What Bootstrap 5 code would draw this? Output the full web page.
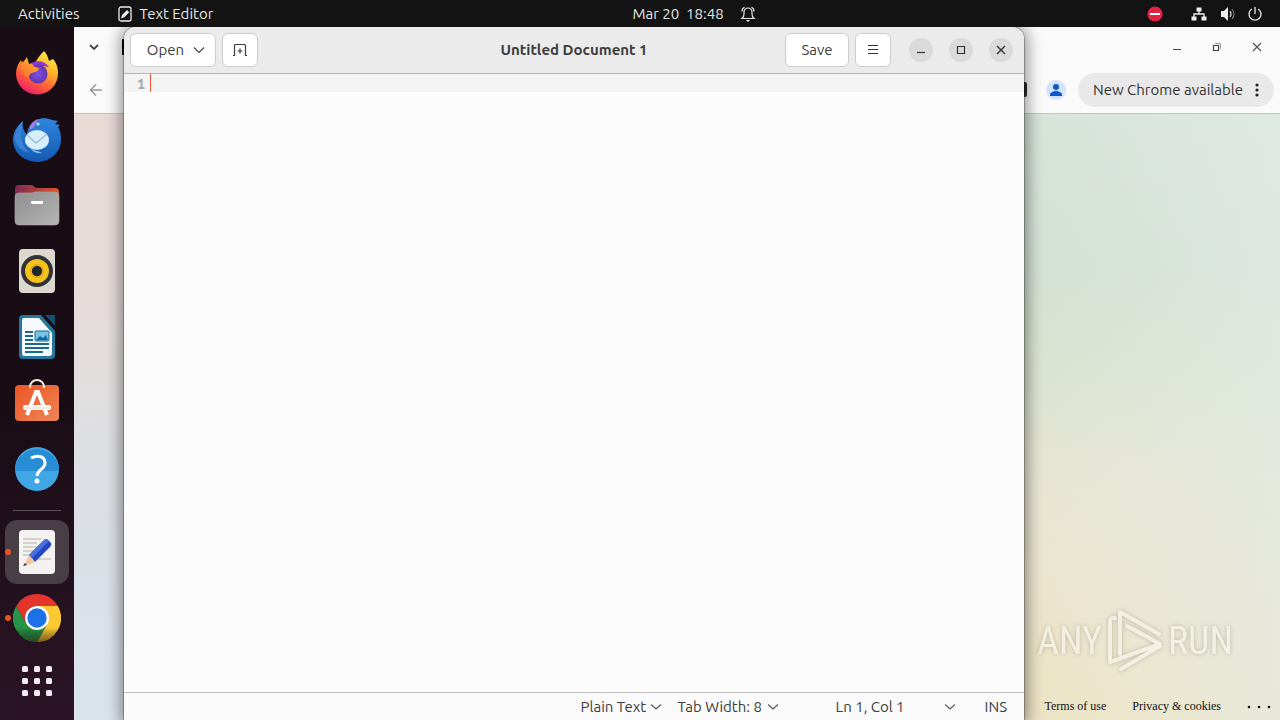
<!DOCTYPE html>
<html lang="en">
<head>
<meta charset="utf-8">
<meta name="viewport" content="width=device-width, initial-scale=1">
<title>Untitled Document 1 - Text Editor</title>
<link href="https://cdn.jsdelivr.net/npm/bootstrap@5.3.0/dist/css/bootstrap.min.css" rel="stylesheet">
<style>
body { font-family: Ubuntu, "Noto Sans", sans-serif; font-size: 15px; line-height: 20px; color: #3d3d3d; }
svg { display: block; flex: none; }
button { font: inherit; color: inherit; background: none; border: 0; padding: 0; }
.topbar { height: 27px; background: #131313; color: #e6e6e6; padding: 0 17px 0 18px; }
.side { flex: 1 1 0; }
.app-menu { margin-left: 38px; }
.clock { margin-left: 107px; }
.tray { gap: 10px; }
.dock { width: 74px; padding-top: 13px; background: linear-gradient(170deg, #190d15 55%, #2c1426); }
.dock-item { height: 66px; width: 64px; margin: 0 5px; flex: none; display: flex; align-items: center; justify-content: center; }
.dock-item svg { width: 48px; height: 48px; }
.tile { width: 64px; height: 64px; border-radius: 12px; background: #483e45; }
.dot { position: absolute; left: 0; width: 6px; height: 6px; border-radius: 50%; background: #e95420; top: 30px; }
.rule { width: 48px; height: 1px; background: #5d545a; margin: 8px auto; flex: none; }
.apps { height: 60px; }
.tabs { height: 40px; padding: 0 17px 0 14px; }
.tools { height: 46px; padding: 0 6px 0 15px; }
.chrome-head { background: #fafafa; border-bottom: 1px solid #bfc6c0; }
.win-btns { gap: 28px; }
.win-btn { width: 12px; height: 12px; }
.sliver { position: absolute; background: #000; }
.sliver-tab { left: 48px; top: 12px; width: 4px; height: 16px; }
.sliver-tool { right: 253px; top: 55px; width: 6px; height: 15px; background: #2b2b2b; border-radius: 2px; }
.profile { width: 20px; height: 20px; }
.update { height: 34px; border-radius: 17px; background: #e9e9e9; padding: 0 15px; color: #333; width: 196px; }
.page {
  background:
    linear-gradient(180deg, #e9dbd7 0%, #e7dbd8 24%, #e2dfdf 45%, #dcdfe5 62%, #dbe4ed 100%) left / 50% 100% no-repeat,
    linear-gradient(90deg, #e4ece800 60%, #e4ece899 100%) right / 50% 100% no-repeat,
    linear-gradient(180deg, #d8e3da 0%, #d4e0d5 25%, #d9e2d1 36%, #dde4d1 46%, #e7e5d2 60%, #ebe5cf 75%, #ede4c5 97%) right / 50% 100% no-repeat;
}
.foot { font-family: "Liberation Serif", serif; font-size: 12px; line-height: 16px; gap: 26px; padding: 0 8px 6px 0; }
.foot a { color: #111; text-decoration: none; }
.watermark { position: absolute; right: 47px; bottom: 46px; color: #f6f4ea; opacity: .75; font-family: "Liberation Sans Narrow", "Roboto Condensed", "Liberation Sans", sans-serif; font-size: 38px; line-height: 66px; filter: drop-shadow(0 0 2px #8a846caa); gap: 5px; }
.editor { position: absolute; top: 0; bottom: 0; left: 50px; right: 256px; background: #fcfcfc; border-radius: 12px 12px 0 0; box-shadow: 0 0 0 1px #00000040, 0 2px 16px 3px #00000070; }
.headbar { height: 47px; background: #ebebeb; border-bottom: 1px solid #b5b5b5; border-radius: 12px 12px 0 0; padding: 0 6px; }
.group { gap: 6px; }
.tool { height: 34px; background: #fff; border: 1px solid #cdcdcd; border-radius: 6px; display: flex; align-items: center; justify-content: center; }
.tool-open { width: 86px; gap: 9px; padding-left: 6px; }
.tool-square { width: 36px; }
.tool-save { width: 64px; }
.circle { width: 24px; height: 24px; border-radius: 50%; background: #dadada; display: flex; align-items: center; justify-content: center; }
.circles { gap: 16px; padding: 0 5px 0 12px; }
.sheet { background: linear-gradient(#f4f4f4, #f4f4f4) top / 100% 18px no-repeat; font-family: "Ubuntu Mono", "DejaVu Sans Mono", monospace; font-size: 14px; line-height: 18px; }
.gutter { width: 26px; padding: 1px 5px 0 0; text-align: right; color: #aaa; font-weight: bold; }
.caret { width: 1px; height: 18px; background: #e2583b; }
.sheet textarea { border: 0; padding: 0; background: none; resize: none; outline: 0; font: inherit; }
.status { height: 28px; border-top: 1px solid #c0c0c0; background: #fafafa; padding: 0 17px 0 0; }
.status button { display: flex; align-items: center; justify-content: space-between; white-space: nowrap; }
.st-type { width: 80px; margin-right: 17px; }
.st-tab { width: 100px; margin-right: 58px; }
.st-pos { width: 119px; margin-right: 30px; }
</style>
</head>
<body class="vh-100 d-flex flex-column overflow-hidden">
<header class="topbar d-flex align-items-center flex-shrink-0">
  <div class="side d-flex align-items-center">
    <button type="button">Activities</button>
    <button type="button" class="d-flex align-items-center gap-2 app-menu">
      <svg width="14" height="16" viewBox="0 0 14 16"><rect x="1" y="1" width="12" height="14" rx="2" fill="none" stroke="#eee" stroke-width="1.300"/><path d="M3 12.500l1-3.500 5-5 2.300 2.300-5 5z" fill="#eee"/></svg>
      Text Editor
    </button>
  </div>
  <button type="button" class="clock d-flex align-items-center">Mar 20&nbsp; 18:48
    <svg class="ms-3" width="16" height="18" viewBox="0 0 16 18" fill="none" stroke="#e6e6e6" stroke-width="1.200"><path d="M2 13.500h12q-2-1.500-2-4.500V7a4 4 0 0 0-8 0v2q0 3-2 4.500zM2 6.500q0-3 2.500-4.500M14 6.500q0-3-2.500-4.500"/><path d="M6 15h4l-2 2z" fill="#eee" stroke="none"/></svg>
  </button>
  <div class="side tray d-flex align-items-center justify-content-end">
    <svg class="me-3" width="16" height="16" viewBox="0 0 16 16"><circle cx="8" cy="8" r="7.600" fill="#e22344"/><path d="M3 8h10" stroke="#fff" stroke-width="2"/></svg>
    <svg width="20" height="16" viewBox="0 0 20 16"><path d="M7.500 1.500h5v4h-5zM2.500 10.500h5v4h-5zM12.500 10.500h5v4h-5z" fill="#eee"/><path d="M10 5v3M5 11V8h10v3" fill="none" stroke="#eee" stroke-width="1.300"/></svg>
    <svg width="18" height="16" viewBox="0 0 18 16"><path d="M2 5h3l4-4v14l-4-4H2z" fill="#eee"/><path d="M11 5q2 3 0 6" fill="none" stroke="#ccc" stroke-width="1.300"/><path d="M13 3q4 5 0 10" fill="none" stroke="#777" stroke-width="1.200"/></svg>
    <svg width="16" height="16" viewBox="0 0 16 16" fill="none" stroke="#ddd" stroke-width="1.400"><path d="M8 1v7M4.800 3a6 6 0 1 0 6.400 0"/></svg>
  </div>
</header>

<div class="d-flex flex-grow-1 overflow-hidden">
  <nav class="dock d-flex flex-column flex-shrink-0" aria-label="Dock">
    <button class="dock-item" aria-label="Firefox"><svg viewBox="0 0 48 48"><defs><linearGradient id="fx" x1=".8" y1="0" x2=".25" y2="1"><stop offset="0" stop-color="#fff14a"/><stop offset=".35" stop-color="#ffb52a"/><stop offset=".65" stop-color="#ff6434"/><stop offset="1" stop-color="#ec1673"/></linearGradient><linearGradient id="fo" x1="1" x2="0" y2="1"><stop stop-color="#ffb02a"/><stop offset="1" stop-color="#ff6a35"/></linearGradient><radialGradient id="fp"><stop offset="0" stop-color="#7d52e8"/><stop offset="1" stop-color="#6136a9"/></radialGradient></defs><path d="M31 2c3 3 4 6 5 10l4-2c4 5 5 9 5 14a21 21 0 1 1-42 1c0-6 2-10 5-14l1 4 5-7 2 7c2-1 4-1 6-1 2-4 5-8 9-12z" fill="url(#fx)"/><path d="M18 14c7-3 14-2 18 4l-6-1-8 1z" fill="#8d38cf"/><circle cx="25" cy="25" r="9.500" fill="url(#fp)"/><path d="M9 12c2 2 6 3 9 3 2 3 5 3 8 4 0 4-6 4-9 6l-2 4c-6-3-8-10-6-17z" fill="url(#fo)"/></svg></button>
    <button class="dock-item" aria-label="Thunderbird"><svg viewBox="0 0 48 48"><defs><linearGradient id="tb" x2="0" y2="1"><stop stop-color="#2f86dd"/><stop offset="1" stop-color="#1459b3"/></linearGradient></defs><path d="M10 6C3 12 0 18 0 25a24 22 0 0 0 48 0c0-6-1-10-3-13l2-2-5-1 3-3-6-1c-8-4-17-1-21 4-3 4-4 8-4 11-3-4-5-7-4-14z" fill="url(#tb)"/><path d="M10 6c-5 14-1 26 7 32C8 36 2 30 2 22 3 15 6 10 10 6z" fill="#3983d8"/><path d="M17 12c1-4 5-7 8-8l-4 8-4 3z" fill="#a77be8"/><circle cx="25" cy="9" r="1.500" fill="#bfe8ff"/><ellipse cx="24" cy="25" rx="12" ry="10" fill="#d9eefb"/><path d="M14 20l9 8 11-9" fill="none" stroke="#9fbdd3" stroke-width="1.500"/><path d="M17 33c4 3 9 3 12 5-6 1-10-2-12-5z" fill="#79c8f8"/></svg></button>
    <button class="dock-item" aria-label="Files"><svg viewBox="0 0 48 48"><defs><linearGradient id="fb"><stop stop-color="#7e2b55"/><stop offset="1" stop-color="#e35427"/></linearGradient><linearGradient id="ff" x2="1" y2="1"><stop stop-color="#8e8e8e"/><stop offset="1" stop-color="#b5b5b5"/></linearGradient></defs><path d="M2 8q0-4 4-4h13l4 3h19q4 0 4 4v14H2z" fill="url(#fb)"/><path d="M2 16q0-4 4-4h13l3-1h20q4 0 4 4v25q0 4-4 4H6q-4 0-4-4z" fill="url(#ff)" stroke="#b6a9a6" stroke-width=".6"/><rect x="18" y="20" width="12" height="3" rx="1" fill="#fff"/></svg></button>
    <button class="dock-item" aria-label="Rhythmbox"><svg viewBox="0 0 48 48"><rect x="6" y="2" width="36" height="44" rx="4" fill="#dcd8ce"/><circle cx="24" cy="24" r="16" fill="#313238"/><circle cx="24" cy="24" r="12" fill="#f5c31c"/><circle cx="24" cy="24" r="6.500" fill="none" stroke="#dca414"/><circle cx="24" cy="24" r="5.200" fill="#22252b"/></svg></button>
    <button class="dock-item" aria-label="LibreOffice Writer"><svg viewBox="0 0 48 48"><path d="M10 2h18l14 16v24q0 4-4 4H10q-4 0-4-4V6q0-4 4-4z" fill="#26779f"/><path d="M32 2h10v11z" fill="#164e73"/><path d="M11 5h15l13 15v20q0 3-3 3H11q-2 0-2-3V8q0-3 2-3z" fill="#f6fafc"/><path d="M12 19h8M12 23h8M12 27h8M12 31h24M12 35h24M12 39h18" stroke="#1b698f" stroke-width="2"/><rect x="22" y="18" width="14" height="10" rx="1" fill="#78c4e9" stroke="#1b698f"/><path d="M23 27l4-4 3 2 3-3 2 5z" fill="#1268a0"/></svg></button>
    <button class="dock-item" aria-label="Ubuntu Software"><svg viewBox="0 0 48 48"><defs><linearGradient id="us" x2="1" y2="1"><stop stop-color="#ec5425"/><stop offset="1" stop-color="#ee8656"/></linearGradient></defs><rect x="2" y="6" width="44" height="36" rx="4" fill="url(#us)"/><path d="M17 9V8a7 7 0 0 1 14 0v1" fill="none" stroke="#f7e6d5" stroke-width="2"/><path d="M14 36l9-23h2l9 23" fill="none" stroke="#fff" stroke-width="4"/><rect x="10" y="26" width="28" height="5" rx="2" fill="#fff"/><path d="M12 29h24" stroke="#efb79b" stroke-width=".7"/></svg></button>
    <button class="dock-item" aria-label="Help"><svg viewBox="0 0 48 48"><circle cx="24" cy="24" r="22" fill="#41a7e4"/><path d="M2 26a22 22 0 1 1 44 0z" fill="#278ed5"/><path d="M18 13c8-4 14-1 14 5 0 7-8 6-8 13" fill="none" stroke="#fff" stroke-width="3"/><circle cx="24" cy="36" r="2.500" fill="#fff"/></svg></button>
    <div class="rule"></div>
    <button class="dock-item position-relative" aria-label="Text Editor"><span class="dot"></span><span class="tile d-flex align-items-center justify-content-center"><svg viewBox="0 0 48 48"><rect x="6" y="2" width="36" height="44" rx="4" fill="#f3f2f0"/><path d="M10 11h18M10 15h14M10 19h17M10 23h13M10 27h10M24 31h14" stroke="#c9c6bd" stroke-width="1.500"/><path d="M31 12q2-2 4 0l3 3q1 2-1 4L22 34l-6-7z" fill="#2448c4"/><path d="M31 12q2-2 4 0l1 1-17 17-3-3z" fill="#4a70dd"/><path d="M16 27l6 7-11 4z" fill="#f3c798"/><path d="M12 35l2 2-4 1z" fill="#333"/></svg></span></button>
    <button class="dock-item position-relative" aria-label="Google Chrome"><span class="dot"></span><svg viewBox="0 0 48 48"><defs><linearGradient id="gs" x2="0" y2="1"><stop offset=".7" stop-color="#000" stop-opacity="0"/><stop offset="1" stop-color="#321" stop-opacity=".65"/></linearGradient></defs><path d="M24 12h20.800A24 24 0 0 1 24 48l10-18z" fill="#fcc934"/><path d="M3.200 12L13.600 30A12 12 0 0 0 34.400 30L24 48A24 24 0 0 1 3.200 12z" fill="#279447"/><path d="M3.200 12a24 24 0 0 1 41.600 0H24a12 12 0 0 0-10.400 18z" fill="#e3352b"/><circle cx="24" cy="24" r="24" fill="url(#gs)"/><circle cx="24" cy="24" r="12" fill="#fff"/><circle cx="24" cy="24" r="9.700" fill="#1b72e8"/></svg></button>
    <button class="dock-item apps" aria-label="Show Applications"><svg viewBox="0 0 48 48" fill="#f5edf3"><rect x="9" y="9" width="6" height="6" rx="1.500"/><rect x="21" y="9" width="6" height="6" rx="1.500"/><rect x="33" y="9" width="6" height="6" rx="1.500"/><rect x="9" y="21" width="6" height="6" rx="1.500"/><rect x="21" y="21" width="6" height="6" rx="1.500"/><rect x="33" y="21" width="6" height="6" rx="1.500"/><rect x="9" y="33" width="6" height="6" rx="1.500"/><rect x="21" y="33" width="6" height="6" rx="1.500"/><rect x="33" y="33" width="6" height="6" rx="1.500"/></svg></button>
  </nav>

  <main class="position-relative flex-grow-1 d-flex flex-column">
    <div class="chrome-head">
      <div class="tabs d-flex align-items-center">
        <button aria-label="Search tabs"><svg width="12" height="12" viewBox="0 0 12 12"><path d="M2 4l4 4 4-4" fill="none" stroke="#444" stroke-width="1.800"/></svg></button>
        <div class="win-btns ms-auto d-flex">
          <button class="win-btn" aria-label="Minimise"><svg width="12" height="12" viewBox="0 0 12 12"><path d="M2 8.500h8" stroke="#444"/></svg></button>
          <button class="win-btn" aria-label="Restore"><svg width="12" height="12" viewBox="0 0 12 12"><path d="M2.500 4.500h5v5h-5z" fill="none" stroke="#444" stroke-width="1.200"/><path d="M4 2.500h5.500V8" fill="none" stroke="#999"/></svg></button>
          <button class="win-btn" aria-label="Close"><svg width="12" height="12" viewBox="0 0 12 12"><path d="M2 2l8 8M10 2l-8 8" stroke="#555" stroke-width="1.200"/></svg></button>
        </div>
      </div>
      <div class="tools d-flex align-items-center">
        <button aria-label="Back"><svg width="13" height="14" viewBox="0 0 13 14"><path d="M7 1.500L1.500 7 7 12.500M1.500 7H13" fill="none" stroke="#999" stroke-width="1.500"/></svg></button>
        <button class="profile ms-auto me-2" aria-label="Profile"><svg width="20" height="20" viewBox="0 0 20 20"><circle cx="10" cy="10" r="10" fill="#d3e3fd"/><circle cx="10" cy="7" r="3" fill="#0b57d0"/><path d="M4 16v-2q2-3 6-3t6 3v2z" fill="#0b57d0"/></svg></button>
        <button class="update ms-1 d-flex align-items-center justify-content-between text-nowrap">New Chrome available<svg width="4" height="16" viewBox="0 0 4 16" fill="#222"><circle cx="2" cy="3" r="1.600"/><circle cx="2" cy="8" r="1.600"/><circle cx="2" cy="13" r="1.600"/></svg></button>
      </div>
    </div>
    <span class="sliver sliver-tab"></span><span class="sliver sliver-tool"></span>
    <div class="page flex-grow-1 d-flex flex-column">
      <div class="foot mt-auto d-flex justify-content-end align-items-center">
        <a href="#">Terms of use</a><a href="#">Privacy &amp; cookies</a>
        <button aria-label="More"><svg width="25" height="6" viewBox="0 0 25 6" fill="#111"><circle cx="2" cy="4" r="1.300"/><circle cx="12" cy="4" r="1.300"/><circle cx="22" cy="4" r="1.300"/></svg></button>
      </div>
    </div>
    <div class="watermark d-flex align-items-center"><span>ANY</span>
      <svg width="56" height="64" viewBox="0 0 56 64" fill="none" stroke="#f6f4ea" stroke-width="4" stroke-linejoin="round" stroke-linecap="round"><path d="M8 9q-5-1-5 4v40l50-18L20 17"/><path d="M52 25L13 3v42"/><path d="M14 60l39-23"/></svg>
      <span>RUN</span></div>

    <section class="editor d-flex flex-column">
      <div class="headbar d-flex align-items-center">
        <div class="side group d-flex align-items-center">
          <button class="tool tool-open">Open <svg width="12" height="12" viewBox="0 0 12 12"><path d="M1 3.500l5 5 5-5" fill="none" stroke="#444" stroke-width="1.200"/></svg></button>
          <button class="tool tool-square" aria-label="New document"><svg width="16" height="16" viewBox="0 0 16 16" fill="none" stroke="#3d3d3d" stroke-width="1.200"><path d="M1 13.500h1.500v-10q0-1 1-1h9q1 0 1 1v10H15M5.500 9h5M8 6.500v5"/></svg></button>
        </div>
        <strong>Untitled Document 1</strong>
        <div class="side group d-flex align-items-center justify-content-end">
          <button class="tool tool-save">Save</button>
          <button class="tool tool-square" aria-label="Menu"><svg width="12" height="12" viewBox="0 0 12 12"><path d="M1 1.500h10M1 5.500h10M1 9.500h10" stroke="#333"/></svg></button>
          <div class="circles d-flex">
            <button class="circle" aria-label="Minimise"><svg width="10" height="10" viewBox="0 0 10 10"><path d="M1 7.500h8" stroke="#333" stroke-width="1.200"/></svg></button>
            <button class="circle" aria-label="Maximise"><svg width="10" height="10" viewBox="0 0 10 10"><path d="M1.500 1.500h7v7h-7z" fill="none" stroke="#333" stroke-width="1.200"/></svg></button>
            <button class="circle" aria-label="Close"><svg width="10" height="10" viewBox="0 0 10 10"><path d="M1 1l8 8M9 1L1 9" stroke="#333" stroke-width="1.400"/></svg></button>
          </div>
        </div>
      </div>
      <div class="sheet d-flex flex-grow-1">
        <div class="gutter">1</div><span class="caret"></span>
        <textarea class="flex-grow-1" aria-label="Document text"></textarea>
      </div>
      <div class="status d-flex align-items-center justify-content-end">
        <button class="st-type">Plain Text <svg width="10" height="8" viewBox="0 0 10 8"><path d="M0 1.500l5 4.500 5-4.500" fill="none" stroke="#555" stroke-width="1.200"/></svg></button>
        <button class="st-tab">Tab Width: 8 <svg width="10" height="8" viewBox="0 0 10 8"><path d="M0 1.500l5 4.500 5-4.500" fill="none" stroke="#555" stroke-width="1.200"/></svg></button>
        <button class="st-pos">Ln 1, Col 1 <svg width="10" height="8" viewBox="0 0 10 8"><path d="M0 1.500l5 4.500 5-4.500" fill="none" stroke="#555" stroke-width="1.200"/></svg></button>
        <span>INS</span>
      </div>
    </section>
  </main>
</div>
<script src="https://cdn.jsdelivr.net/npm/bootstrap@5.3.0/dist/js/bootstrap.bundle.min.js"></script>
</body>
</html>
